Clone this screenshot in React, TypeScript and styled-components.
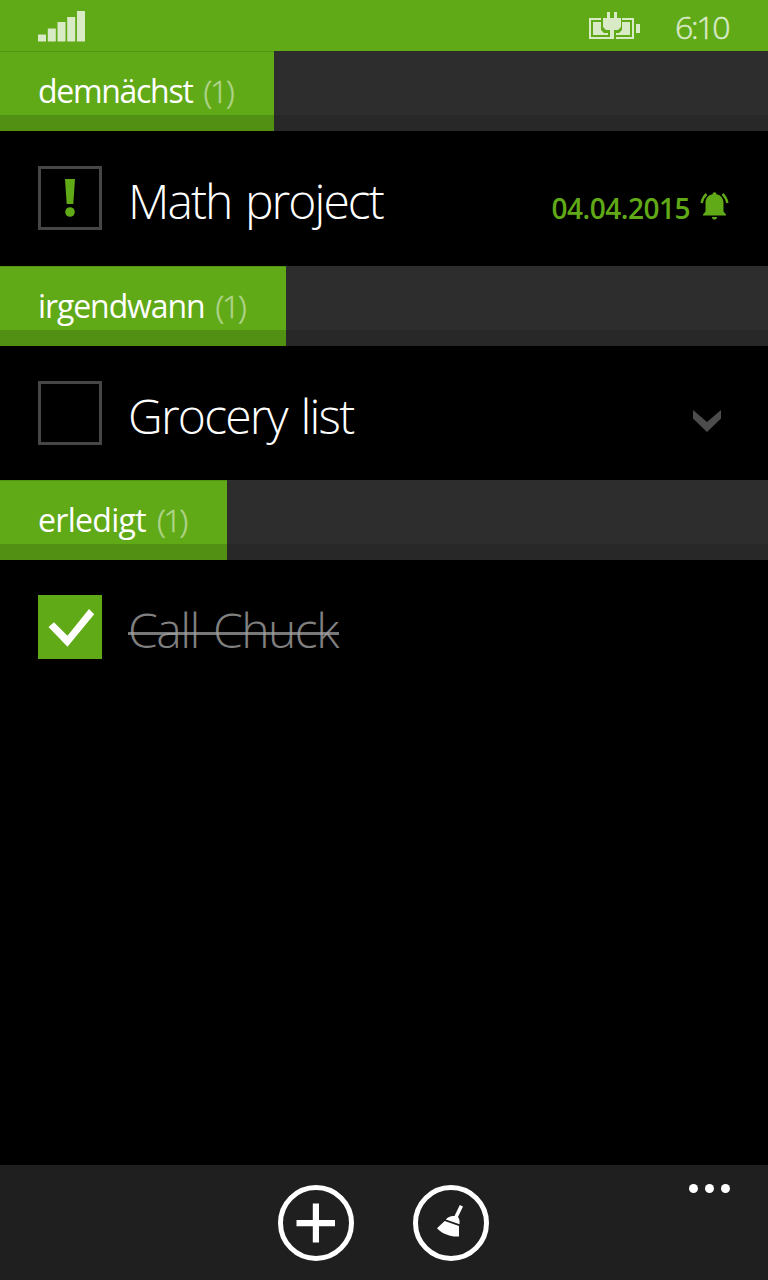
import React from "react";
import styled, { createGlobalStyle } from "styled-components";

const GREEN = "#60a917";
const PALE = "#d9eac6";

const GlobalStyle = createGlobalStyle`
  body { margin: 0; background: #000; }
  * { box-sizing: border-box; }
`;

const Screen = styled.div`
  width: 768px;
  height: 1280px;
  display: flex;
  flex-direction: column;
  background: #000;
  color: #fff;
  font-family: "Open Sans", "Noto Sans", sans-serif;
  overflow: hidden;
`;

const StatusBar = styled.header`
  height: 51.3px;
  flex: none;
  display: flex;
  align-items: flex-start;
  padding: 11px 39px 0 38px;
  background: ${GREEN};
  color: ${PALE};
`;

const Battery = styled.svg`
  margin-left: auto;
`;

const Clock = styled.time`
  width: 54px;
  margin: -2px 0 0 35px;
  font-size: 32px;
  font-weight: 300;
  -webkit-text-stroke: 0.5px ${PALE};
  line-height: 36px;
  letter-spacing: -2.3px;
  white-space: nowrap;
`;

const List = styled.main`
  flex: 1;
`;

const GroupHeader = styled.div`
  height: 80px;
  display: flex;
  background: linear-gradient(#2d2d2d 64px, #282828 64px);
`;

const GroupTab = styled.h2<{ $width: number }>`
  width: ${(p) => p.$width}px;
  margin: 0;
  padding: 17px 0 0 38px;
  display: flex;
  gap: 11px;
  font-size: 32px;
  font-weight: 400;
  line-height: 46px;
  white-space: nowrap;
  background: linear-gradient(${GREEN} 64px, #529014 64px);
  box-shadow: inset 0 1px 0 rgba(0, 0, 0, 0.12);
`;

const GroupName = styled.span<{ $spacing: number }>`
  letter-spacing: ${(p) => p.$spacing}px;
`;

const GroupCount = styled.span`
  color: #b0d48b;
  font-weight: 300;
  -webkit-text-stroke: 0.5px #b0d48b;
  letter-spacing: -2.2px;
`;

const TaskRow = styled.div`
  height: 134.3px;
  padding: 35px 38px 0;
  display: flex;
  align-items: flex-start;
`;

const Checkbox = styled.span<{ $done?: boolean }>`
  width: 64px;
  height: 64px;
  flex: none;
  display: grid;
  place-items: center;
  border: ${(p) => (p.$done ? "0" : "3px solid #464646")};
  background: ${(p) => (p.$done ? GREEN : "transparent")};
`;

const TaskTitle = styled.span<{ $done?: boolean; $spacing: number }>`
  position: relative;
  margin-left: 26px;
  font-size: 48px;
  font-weight: 300;
  line-height: 70px;
  letter-spacing: ${(p) => p.$spacing}px;
  word-spacing: 3px;
  white-space: nowrap;
  color: ${(p) => (p.$done ? "#808080" : "#fff")};
  &::after {
    content: "";
    display: ${(p) => (p.$done ? "block" : "none")};
    position: absolute;
    left: 0;
    top: 37px;
    width: 211px;
    height: 3px;
    background: rgba(160, 160, 160, 0.75);
  }
`;

const Due = styled.span`
  margin: 20.8px 0 0 auto;
  display: flex;
  align-items: flex-start;
  color: ${GREEN};
  font-size: 28px;
  font-weight: 600;
  line-height: 42px;
  letter-spacing: -0.5px;
`;

const Bell = styled.svg`
  margin: 5px 0 0 10px;
`;

const Chevron = styled.svg`
  margin: 29.3px 9px 0 auto;
`;

const AppBar = styled.footer`
  height: 115px;
  flex: none;
  display: grid;
  grid-template-columns: 1fr auto 1fr;
  background: #1f1f1f;
`;

const Actions = styled.div`
  grid-column: 2;
  display: flex;
  gap: 59px;
  padding-top: 19.6px;
  margin-left: -2px;
`;

const RoundButton = styled.button`
  width: 76px;
  height: 76px;
  padding: 0;
  border: 5px solid #fff;
  border-radius: 50%;
  background: none;
  display: grid;
  place-items: center;
`;

const More = styled.div`
  justify-self: end;
  display: flex;
  gap: 7px;
  padding: 19px 38px 0 0;
`;

const Dot = styled.i`
  width: 9px;
  height: 9px;
  border-radius: 50%;
  background: #fff;
`;

function Group(props: { name: string; width: number; spacing: number; children: React.ReactNode }) {
  return (
    <section>
      <GroupHeader>
        <GroupTab $width={props.width}>
          <GroupName $spacing={props.spacing}>{props.name}</GroupName>
          <GroupCount>(1)</GroupCount>
        </GroupTab>
      </GroupHeader>
      <TaskRow>{props.children}</TaskRow>
    </section>
  );
}

export default function App() {
  return (
    <>
      <GlobalStyle />
      <Screen>
        <StatusBar>
          <svg width="48" height="31" viewBox="0 0 48 31" fill={PALE}>
            <path d="M0 23.5h8V30.5H0zM9.8 17.5h8v13h-8zM19.5 11h8v19.5h-8zM29.2 6h8v24.5h-8zM39 0h8v30.5h-8z" />
          </svg>
          <Battery width="51" height="28" viewBox="0 0 51 28" fill={PALE}>
            <path d="M0 7h12v2H2v17h19v2H0zM33 7h12v21H27v-2h16V9H33zM47 13h4v9h-4z" />
            <path d="M4 11h8v8l3 3h4v2H4zM33 11h8v13H27v-2h3l3-3z" />
            <path d="M18 1h3v6h4V1h3v6h4v9l-3 3h-4v9h-4v-9h-4l-3-3V7h4z" />
          </Battery>
          <Clock>6:10</Clock>
        </StatusBar>

        <List>
          <Group name="demnächst" width={273.5} spacing={-1.3}>
            <Checkbox>
              <svg width="10" height="38" viewBox="0 0 10 38" fill={GREEN}>
                <path d="M0 0h10L8.3 25H1.7z" />
                <circle cx="5" cy="33" r="4.8" />
              </svg>
            </Checkbox>
            <TaskTitle $spacing={-1.95}>Math project</TaskTitle>
            <Due>
              04.04.2015
              <Bell width="30" height="28" viewBox="0 0 30 28" fill={GREEN}>
                <path d="M12.500 2.300a2 2 0 0 1 4 0C21 3 23.500 6.500 23.500 11v8.500l2.500 3V23.500H3v-1l2.500-3V11C5.500 6.500 8 3 12.500 2.300zM11.800 25h5.400c-.5 3.400-4.900 3.400-5.400 0z" />
                <path d="M6.500 2C4 4.300 2.300 7.300 1.600 11M22.500 2C25 4.300 26.700 7.300 27.400 11" fill="none" stroke={GREEN} strokeWidth="2.400" />
              </Bell>
            </Due>
          </Group>

          <Group name="irgendwann" width={286.3} spacing={-1.1}>
            <Checkbox />
            <TaskTitle $spacing={-1.8}>Grocery list</TaskTitle>
            <Chevron width="28" height="22" viewBox="0 0 28 22" fill="#4c4c4c">
              <path d="M0 0l14 12L28 0v8.500L14 22 0 8.500z" />
            </Chevron>
          </Group>

          <Group name="erledigt" width={227.3} spacing={-0.7}>
            <Checkbox $done>
              <svg width="64" height="64" viewBox="0 0 64 64" fill="#fff">
                <path d="M10.500 32L16 27.200 29.500 40.700 51 14 56.200 19.300 29.500 51.700z" />
              </svg>
            </Checkbox>
            <TaskTitle $done $spacing={-1.5}>Call Chuck</TaskTitle>
          </Group>
        </List>

        <AppBar>
          <Actions>
            <RoundButton aria-label="add">
              <svg width="40" height="40" viewBox="0 0 40 40" fill="#fff">
                <path d="M16.800 .5h6.200V17h16v6.200h-16v16.300H16.800v-16.300H.5V17h16.300z" />
              </svg>
            </RoundButton>
            <RoundButton aria-label="clean up">
              <svg width="66" height="66" viewBox="0 0 66 66" fill="#fff">
                <path d="M41.800 15L45 16.500 40 27C41.500 28.800 41.800 31.500 41.500 34.300L27.800 29.500C30 26.700 33 25.600 36.500 26z" />
                <path d="M26.700 31L41 36V46.500C33.500 47.300 24 44 19 38.300z" />
              </svg>
            </RoundButton>
          </Actions>
          <More>
            <Dot />
            <Dot />
            <Dot />
          </More>
        </AppBar>
      </Screen>
    </>
  );
}
